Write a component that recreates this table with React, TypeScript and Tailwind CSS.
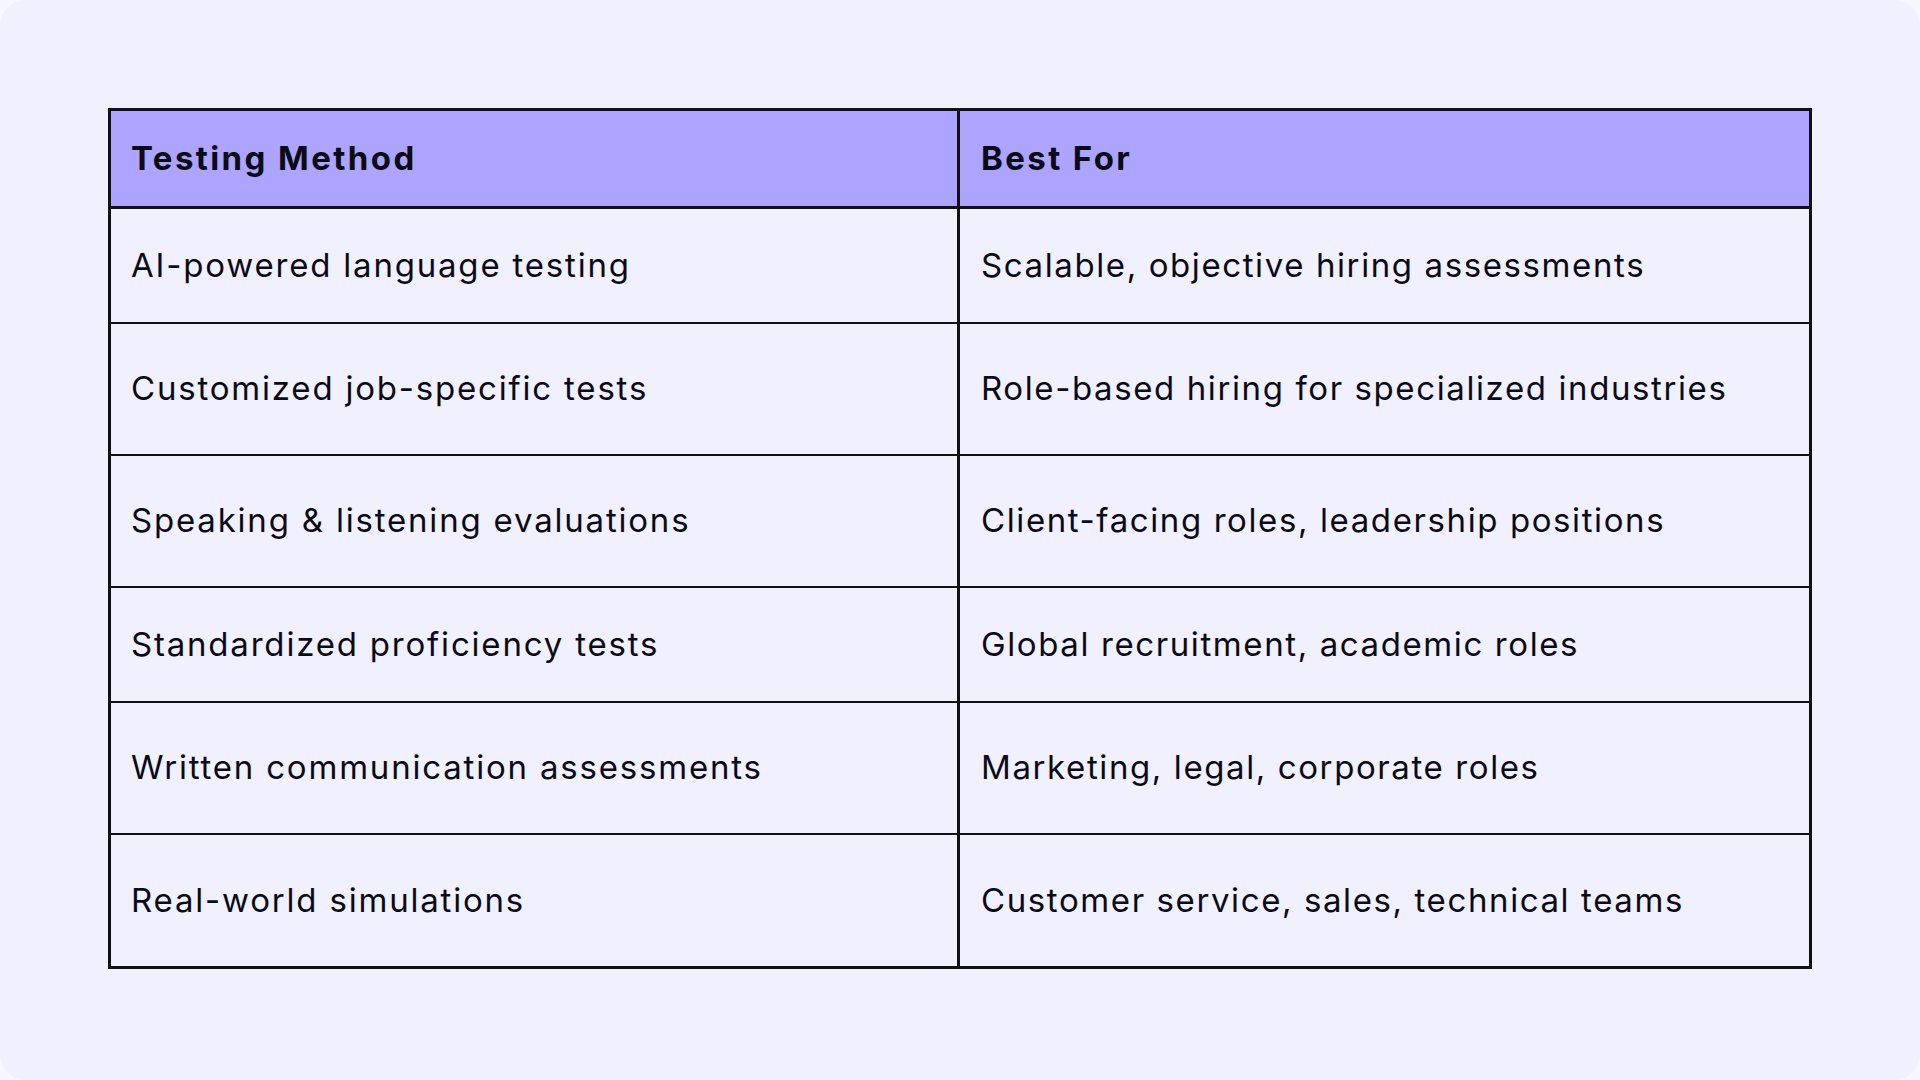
const rows = [
  { method: "AI-powered language testing", best: "Scalable, objective hiring assessments", h: "h-[115px]" },
  { method: "Customized job-specific tests", best: "Role-based hiring for specialized industries", h: "h-[132px]" },
  { method: "Speaking & listening evaluations", best: "Client-facing roles, leadership positions", h: "h-[132px]" },
  { method: "Standardized proficiency tests", best: "Global recruitment, academic roles", h: "h-[115px]" },
  { method: "Written communication assessments", best: "Marketing, legal, corporate roles", h: "h-[132px]" },
  { method: "Real-world simulations", best: "Customer service, sales, technical teams", h: "h-[131px]" },
]

export default function App() {
  return (
    <div className="w-[1920px] h-[1080px] bg-[#f7f5fd] font-['Inter',sans-serif] text-[#0b0b18]">
      <div className="h-full rounded-[26px] bg-[#f0f0fe] pt-[108px] px-[108px]">
        {/* Comparison table */}
        <div className="w-[1704px] border-[3px] border-[#111111]">
          <div className="grid grid-cols-2 h-[98px] bg-[#aca4fe] border-b-[3px] border-[#111111]">
            <div className="flex items-center pl-[20px] border-r-[3px] border-[#111111] text-[33px] font-bold tracking-[2.4px]">
              Testing Method
            </div>
            <div className="flex items-center pl-[21px] text-[33px] font-bold tracking-[2.4px]">
              Best For
            </div>
          </div>
          {rows.map((r, i) => (
            <div
              key={r.method}
              className={`grid grid-cols-2 ${r.h} ${i < rows.length - 1 ? "border-b-[2px] border-[#111111]" : ""}`}
            >
              <div className="flex items-center pl-[20px] border-r-[3px] border-[#111111] text-[33px] tracking-[1.8px]">
                {r.method}
              </div>
              <div className="flex items-center pl-[21px] text-[33px] tracking-[1.6px]">{r.best}</div>
            </div>
          ))}
        </div>
      </div>
    </div>
  )
}
